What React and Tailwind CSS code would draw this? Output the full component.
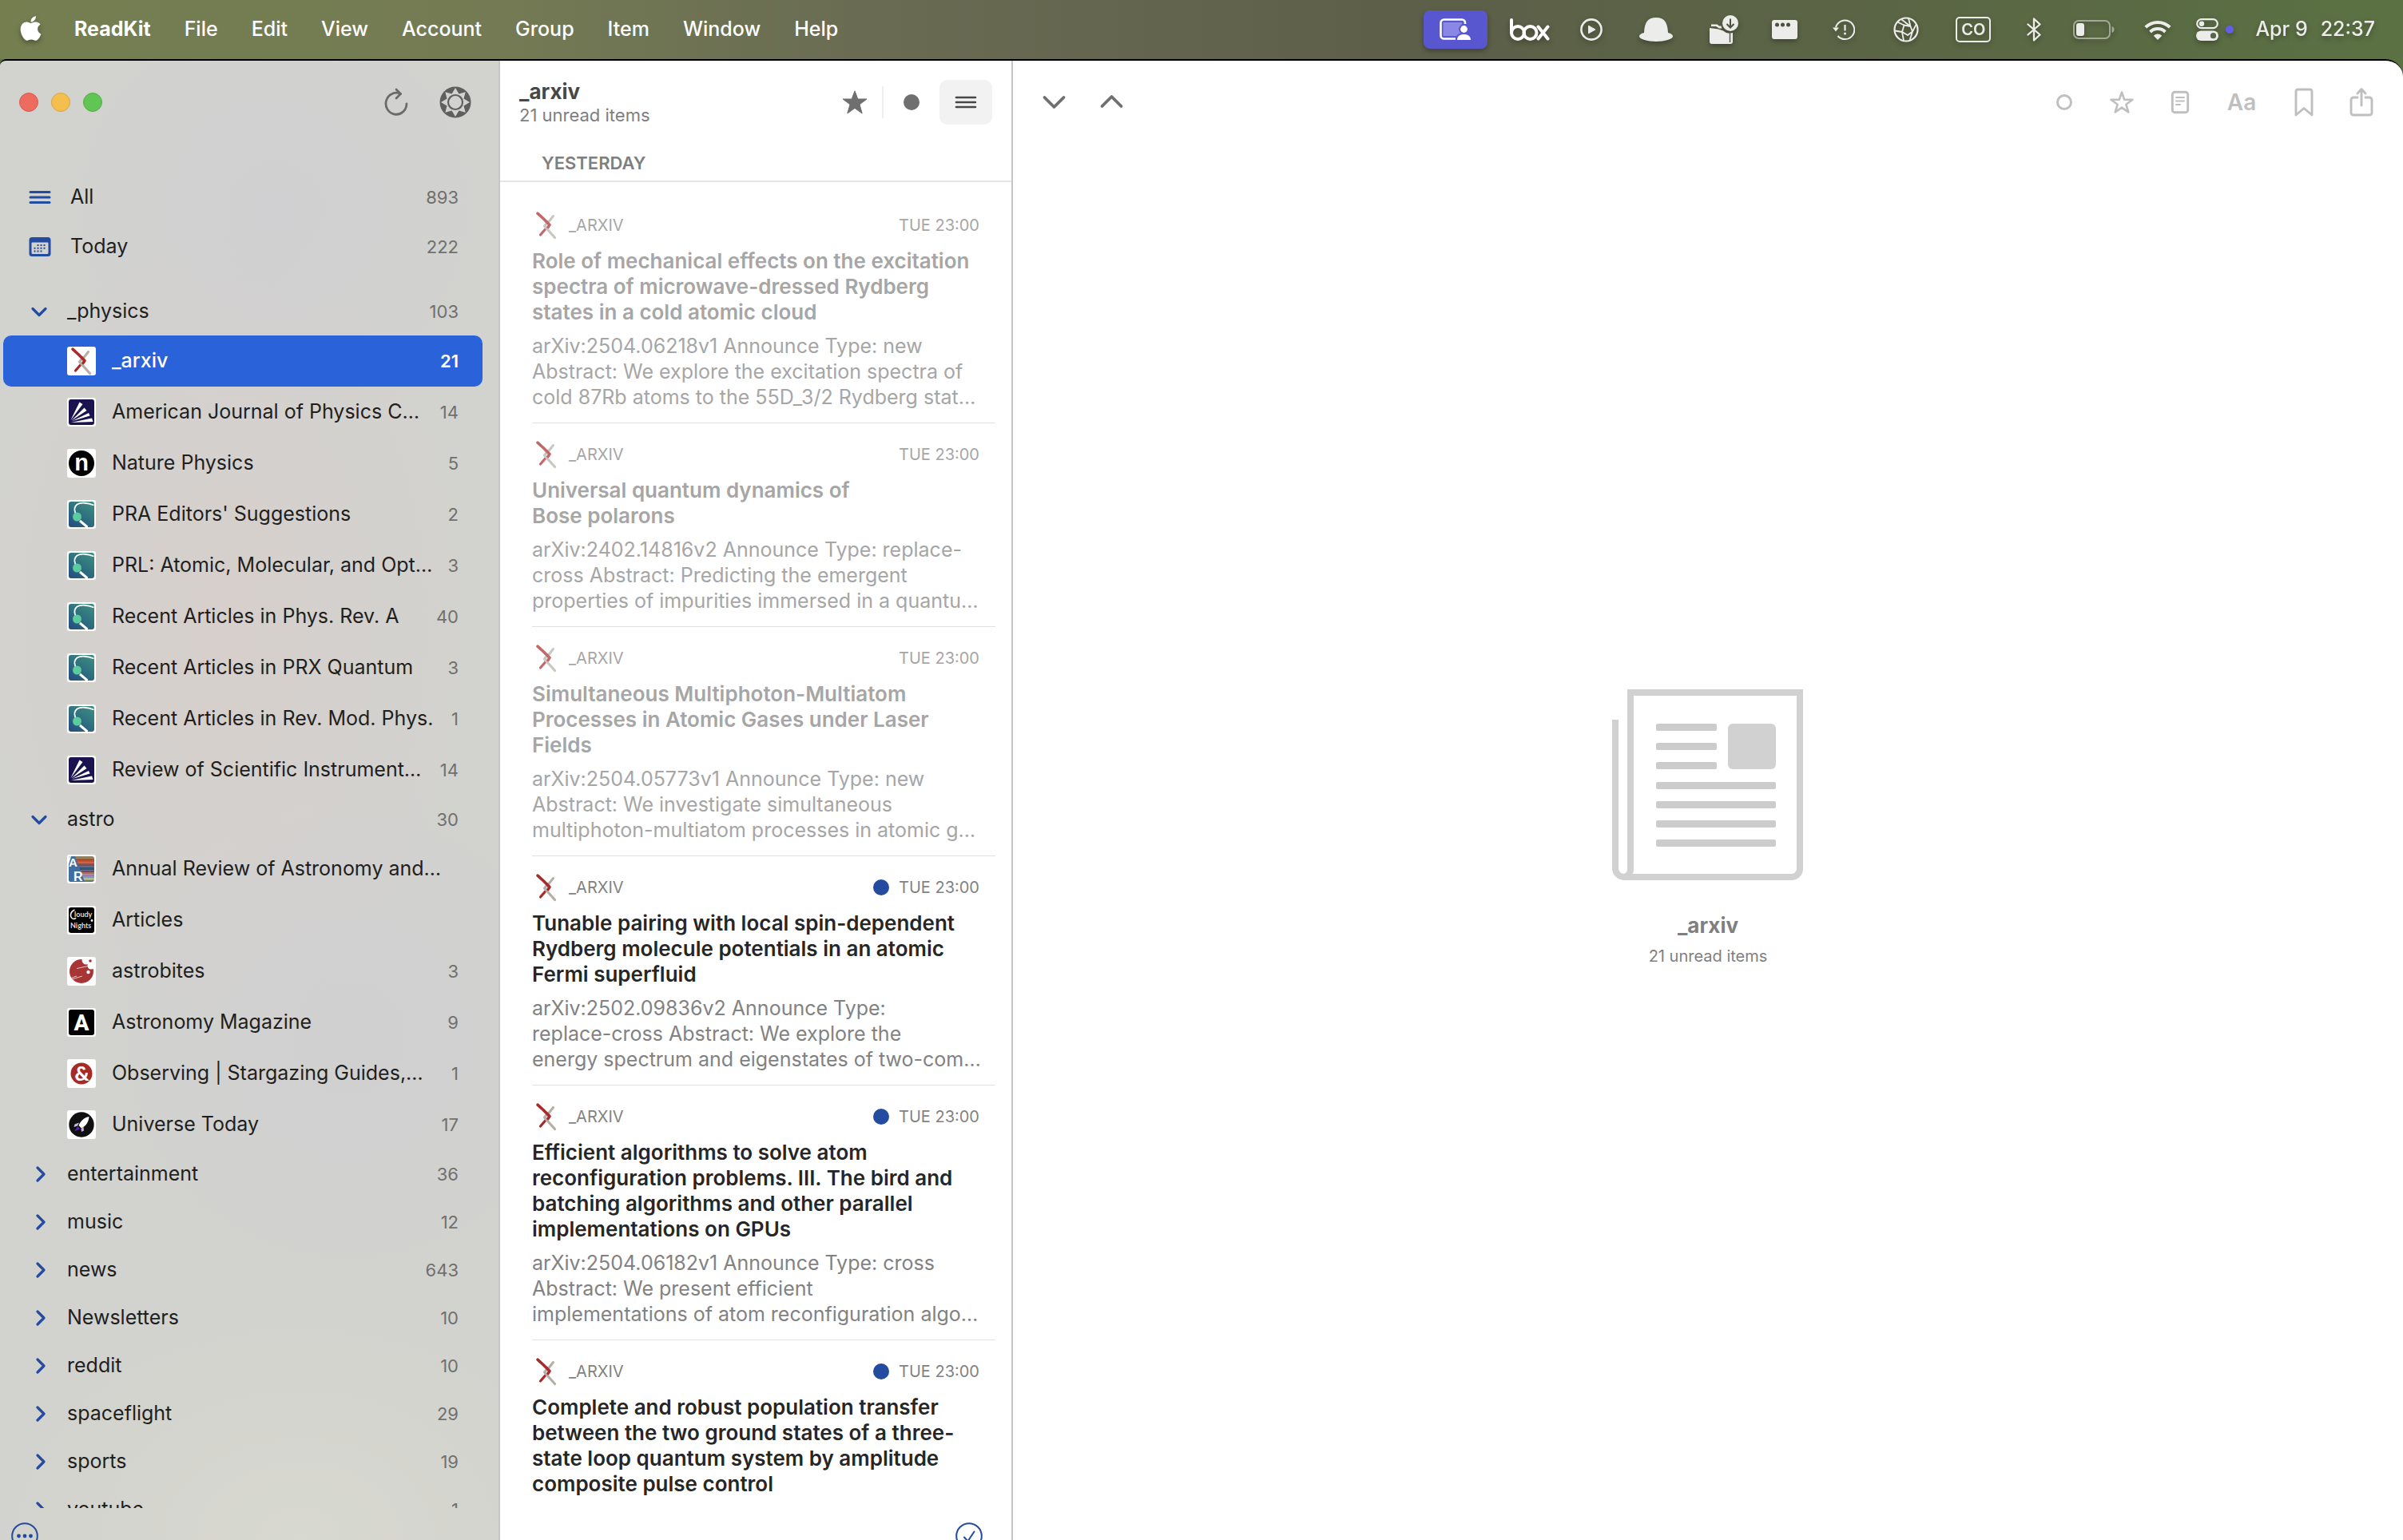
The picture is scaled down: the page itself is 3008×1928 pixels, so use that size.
import React from "react";
import { FaApple } from "react-icons/fa";

/* ---------- favicons ---------- */

function ArxivMark({ className }) {
  return (
    <svg viewBox="0 0 36 36" className={className} fill="none" strokeLinecap="round" strokeLinejoin="round" aria-hidden="true">
      <path d="M26.500 6.500 21 13.500" stroke="#b5afa8" strokeWidth="3" />
      <path d="M10.500 30 17 22.500" stroke="#a82b2b" strokeWidth="3.200" />
      <path d="M20 13.500 15.500 19 28.500 33.500" stroke="#b5afa8" strokeWidth="3.200" />
      <path d="M7 3.200 14 9.500 22 17.500 20 20.500" stroke="#a82b2b" strokeWidth="3.600" />
    </svg>
  );
}

function Tile({ children }) {
  return (
    <svg viewBox="0 0 36 36" className="size-9 shrink-0" fill="none" aria-hidden="true">
      <rect width="36" height="36" rx="3" fill="#fff" />
      {children}
    </svg>
  );
}

function AipIcon() {
  return (
    <Tile>
      <rect x="2" y="2" width="32" height="32" rx="3" fill="#1b1350" />
      <g fill="#fff">
        <path d="M4.500 28 15.500 5.500 19.500 8Z" />
        <path d="M5.500 28.500 21.500 12.500 24.500 16Z" />
        <path d="M6 29.300 27 19 28.500 22.500Z" />
        <path d="M5 31 31 25.500 32.500 30Z" />
      </g>
    </Tile>
  );
}

function NatureIcon() {
  return (
    <Tile>
      <circle cx="18" cy="18" r="16" fill="#000" />
      <text x="18" y="27" textAnchor="middle" fontFamily="Liberation Sans, sans-serif" fontWeight="700" fontSize="29" fill="#fff">n</text>
    </Tile>
  );
}

function ApsIcon() {
  return (
    <Tile>
      <defs>
        <linearGradient id="aps" x1="0.200" y1="1" x2="0.900" y2="0">
          <stop offset="0" stopColor="#24527f" />
          <stop offset="1" stopColor="#3c8f80" />
        </linearGradient>
      </defs>
      <rect x="2" y="2" width="32" height="32" rx="3" fill="url(#aps)" />
      <path d="M33.500 6.500C26 3.500 17 2.500 12.500 5.500 8.500 8.500 9 13 10.500 17" stroke="#fff" strokeWidth="1.800" />
      <path d="M16 26 25.500 34" stroke="#fff" strokeWidth="3" />
      <ellipse cx="12.500" cy="21" rx="5.500" ry="5.500" fill="#5ccc9f" />
    </Tile>
  );
}

function AnnualReviewIcon() {
  const bands = ["#8a8160", "#a0522f", "#c8492c", "#b3563f", "#7a4a55", "#3f5f85", "#35506f", "#6b4c63", "#a5705a", "#9a7cae", "#7f9cb0", "#b9b07c", "#5f7a66"];
  return (
    <Tile>
      <clipPath id="arClip"><rect x="2" y="2" width="32" height="32" rx="3" /></clipPath>
      <g clipPath="url(#arClip)">
        {bands.map((color, i) => (
          <rect key={i} x="2" y={2 + i * 2.5} width="32" height="2.600" fill={color} />
        ))}
        <path d="M2 2H10L22 34H2Z" fill="#3f6f9f" />
        <path d="M2 2H5L2 12Z" fill="#fff" />
        <text x="2" y="15" fontFamily="Liberation Sans, sans-serif" fontWeight="700" fontSize="15" fill="#fff">A</text>
        <text x="8" y="33" fontFamily="Liberation Sans, sans-serif" fontWeight="700" fontSize="16" fill="#fff">R</text>
      </g>
    </Tile>
  );
}

function CloudyNightsIcon() {
  return (
    <Tile>
      <rect x="2" y="2" width="32" height="32" rx="3" fill="#000" />
      <path d="M9.500 5C4.500 7 3 12 6 15.500 7.500 17 10 16.500 11 15" stroke="#eee" strokeWidth="1.600" />
      <text x="9" y="14" fontFamily="Lato, sans-serif" fontWeight="700" fontSize="9" fill="#ddd">loudy</text>
      <text x="4" y="28" fontFamily="Lato, sans-serif" fontWeight="700" fontSize="9" fill="#ddd">Nights</text>
      <circle cx="31" cy="18.500" r="1.400" fill="#fff" />
    </Tile>
  );
}

function AstrobitesIcon() {
  return (
    <Tile>
      <circle cx="18" cy="18" r="15" fill="#a93434" />
      <circle cx="24" cy="4" r="5.500" fill="#fff" />
      <circle cx="30" cy="11" r="4.500" fill="#fff" />
      <circle cx="26.500" cy="19" r="2.200" fill="#fff" />
      <circle cx="29" cy="5" r="1.800" fill="#a93434" />
      <path d="M12 14.500 26 11.500M6 28 19 24M5 26.500 12 24" stroke="#e8c4c4" strokeWidth="1" />
    </Tile>
  );
}

function AstronomyIcon() {
  return (
    <Tile>
      <rect x="2" y="2" width="32" height="32" rx="3" fill="#000" />
      <text x="18" y="28" textAnchor="middle" fontFamily="Roboto, sans-serif" fontWeight="800" fontSize="28" fill="#fff">A</text>
    </Tile>
  );
}

function ObservingIcon() {
  return (
    <Tile>
      <circle cx="18" cy="18" r="13.500" fill="#a62a25" />
      <text x="18.500" y="27" textAnchor="middle" fontFamily="Lato, sans-serif" fontWeight="900" fontSize="25" fill="#fff">&amp;</text>
    </Tile>
  );
}

function UniverseIcon() {
  return (
    <Tile>
      <circle cx="18" cy="18" r="15.700" fill="#101010" />
      <path d="M27.500 8C21.500 9 17 13 14.500 19L18 22.500C23.500 19.500 27 15 27.500 8Z" fill="#fff" />
      <path d="M15 15.500 9.500 17.500 8.500 21 13 19.500ZM20.500 20.500 21 25.500 18 27 17.500 23Z" fill="#c9b5ea" />
      <path d="M13.500 20 9 26.500 16 23.500Z" fill="#5a20c8" />
    </Tile>
  );
}

/* ---------- menu bar ---------- */

const MENUS = ["File", "Edit", "View", "Account", "Group", "Item", "Window", "Help"];

function StatusButton({ label, className, children }) {
  return (
    <button type="button" aria-label={label} className={`flex shrink-0 items-center justify-center ${className}`}>
      {children}
    </button>
  );
}

function MenuBar() {
  return (
    <header className="flex h-[74px] shrink-0 items-center bg-[linear-gradient(90deg,#747f50_0%,#747b54_20%,#686a52_38%,#5d5f49_58%,#5a6545_78%,#5b7143_100%)] pr-[35px] pl-[25px] text-[25px] font-medium whitespace-nowrap text-white [text-shadow:0_3px_6px_rgba(0,0,0,0.35)]">
      <nav aria-label="Menu bar" className="flex items-center gap-[42px]">
        <button type="button" aria-label="Apple menu" className="flex w-[26px] items-center justify-center pb-1 drop-shadow-[0_3px_3px_rgba(0,0,0,0.35)]">
          <FaApple size={35} className="shrink-0" />
        </button>
        <button type="button" className="font-bold">ReadKit</button>
        {MENUS.map((menu) => (
          <button key={menu} type="button">{menu}</button>
        ))}
      </nav>

      <div className="ml-auto flex items-center text-[#ececea] drop-shadow-[0_3px_3px_rgba(0,0,0,0.3)]">
        <StatusButton label="Screen sharing" className="h-12 w-20 rounded-[8px] bg-[#5957d0]">
          <svg viewBox="0 0 40 28" className="h-7 w-10" fill="none" aria-hidden="true">
            <path d="M20 25.500H5.500A4 4 0 0 1 1.500 21.500V5.500A4 4 0 0 1 5.500 1.500H28A4 4 0 0 1 32 5.500V7" stroke="#fff" strokeWidth="2.600" />
            <rect x="4.500" y="5" width="23.500" height="17" fill="#8a88e4" />
            <circle cx="30.500" cy="13.500" r="6.500" fill="#5957d0" />
            <path d="M20 27c0-6 4-9 10.500-9S40 21 40 27Z" fill="#5957d0" />
            <circle cx="30.500" cy="13.500" r="4.400" fill="#fff" />
            <path d="M22 27c0-4.500 3.500-7 8.500-7s8.500 2.500 8.500 7Z" fill="#fff" />
          </svg>
        </StatusButton>
        <StatusButton label="Box" className="ml-7">
          <svg viewBox="0 0 50 28" className="h-7 w-[50px]" fill="none" stroke="#fff" strokeWidth="4" strokeLinecap="round" aria-hidden="true">
            <path d="M2 2V18" />
            <circle cx="10" cy="18" r="8" />
            <circle cx="25.500" cy="18" r="8" />
            <path d="M35.500 10.500 47.500 25.500M47.500 10.500 35.500 25.500" />
          </svg>
        </StatusButton>
        <StatusButton label="Now playing" className="ml-[38px]">
          <svg viewBox="0 0 28 28" className="size-7" fill="none" aria-hidden="true">
            <circle cx="14" cy="14" r="12.600" stroke="currentColor" strokeWidth="2.600" />
            <path d="M10.500 9.200V18.800L19 14Z" fill="currentColor" stroke="currentColor" strokeLinejoin="round" />
          </svg>
        </StatusButton>
        <StatusButton label="Bartender" className="ml-[46px]">
          <svg viewBox="0 0 42 30" className="h-[30px] w-[42px]" fill="currentColor" aria-hidden="true">
            <path d="M6 19C6.500 7 10 0 21 0S35.500 7 36 19C40 20 42 21.500 42 23.500 42 27 32 30 21 30S0 27 0 23.500C0 21.500 2 20 6 19Z" />
          </svg>
        </StatusButton>
        <StatusButton label="Downloads" className="ml-[46px]">
          <svg viewBox="0 0 36 36" className="size-9" aria-hidden="true">
            <path d="M0 16 11 17.500 17 19.500A12 12 0 0 0 29 22V33A3 3 0 0 1 26 36H3A3 3 0 0 1 0 33Z" fill="currentColor" />
            <path d="M2 14 8 14 12 16.500H15.500A12 12 0 0 1 14.500 13.500H12L9.500 11.500H2Z" fill="currentColor" />
            <path d="M25.500 22.500V34" stroke="#5a6146" strokeWidth="1.500" />
            <circle cx="26" cy="10" r="10" fill="currentColor" />
            <path d="M26 4.500V15M21.500 11 26 15.500 30.500 11" fill="none" stroke="#4c523c" strokeWidth="2" />
          </svg>
        </StatusButton>
        <StatusButton label="Window manager" className="ml-[42px]">
          <svg viewBox="0 0 32 24" className="h-6 w-8" aria-hidden="true">
            <rect width="32" height="24" rx="3" fill="currentColor" />
            <g fill="#4c523c"><circle cx="6.500" cy="6" r="2.500" /><circle cx="13.500" cy="6" r="2.500" /><circle cx="20.500" cy="6" r="2.500" /></g>
          </svg>
        </StatusButton>
        <StatusButton label="Time Machine" className="ml-[44px]">
          <svg viewBox="0 0 28 28" className="size-7" fill="none" stroke="currentColor" strokeWidth="2" aria-hidden="true">
            <path d="M4 11.500A11.800 11.800 0 1 1 6.500 22" />
            <path d="M0 11.500H8L4 16.500Z" fill="currentColor" stroke="none" />
            <path d="M15.500 8V15.500" strokeWidth="2.200" />
            <circle cx="15.500" cy="19" r="1.500" fill="currentColor" stroke="none" />
          </svg>
        </StatusButton>
        <StatusButton label="Capture" className="ml-12">
          <svg viewBox="0 0 32 32" className="size-8" fill="none" stroke="currentColor" strokeWidth="2.200" strokeLinejoin="round" aria-hidden="true">
            <circle cx="16" cy="16" r="14.500" />
            <path d="M13.500 10.500 21.500 12 24 18.500 18 23 11 19ZM21.500 12 10.500 3.500M24 18.500 29 9M24 18.500 20.500 29.500M11 19 13 30M11 19 2 17.500M13.500 10.500 5 6.500M21.500 12 19 2" strokeWidth="1.800" />
          </svg>
        </StatusButton>
        <StatusButton label="Input source CO" className="ml-[46px] h-8 w-11 rounded-[5px] border-2 border-[#ececea] text-xl leading-none font-semibold">
          CO
        </StatusButton>
        <StatusButton label="Bluetooth" className="ml-[45px]">
          <svg viewBox="0 0 18 30" className="h-[30px] w-[18px]" fill="none" stroke="currentColor" strokeWidth="2.300" strokeLinejoin="round" strokeLinecap="round" aria-hidden="true">
            <path d="M1.500 8.500 16.500 21.500 9 28.500V1.500L16.500 8.500 1.500 21.500" />
          </svg>
        </StatusButton>
        <StatusButton label="Battery" className="ml-10">
          <svg viewBox="0 0 52 24" className="h-6 w-[52px]" fill="none" aria-hidden="true">
            <rect x="1" y="1" width="45" height="22" rx="6" stroke="#a3a997" strokeWidth="2" />
            <rect x="4" y="4" width="10" height="16" rx="3" fill="currentColor" />
            <path d="M48.500 8V16C50.500 15.500 51.500 14 51.500 12S50.500 8.500 48.500 8Z" fill="#a3a997" />
          </svg>
        </StatusButton>
        <StatusButton label="Wi-Fi" className="ml-[37px]">
          <svg viewBox="0 0 34 26" className="h-[26px] w-[34px]" fill="none" stroke="currentColor" strokeWidth="4" aria-hidden="true">
            <path d="M1.800 10.200A21.500 21.500 0 0 1 32.200 10.200" />
            <path d="M7.600 16A13.300 13.300 0 0 1 26.400 16" />
            <path d="M17 26 11.800 20.700A7.400 7.400 0 0 1 22.200 20.700Z" fill="currentColor" stroke="none" />
          </svg>
        </StatusButton>
        <StatusButton label="Control Center" className="ml-[31px] gap-[9px]">
          <svg viewBox="0 0 28 28" className="size-7" fill="none" aria-hidden="true">
            <rect x="1.200" y="1.200" width="25.600" height="11" rx="5.500" stroke="currentColor" strokeWidth="2.200" />
            <circle cx="7" cy="6.700" r="3.200" fill="currentColor" />
            <rect y="15.500" width="28" height="12.500" rx="6.200" fill="currentColor" />
            <circle cx="21.500" cy="21.700" r="3.600" fill="#59644a" />
          </svg>
          <span className="size-2.5 rounded-full bg-[#625fe6]" />
        </StatusButton>
        <button type="button" className="ml-[27px] flex gap-4">
          <span>Apr 9</span>
          <span>22:37</span>
        </button>
      </div>
    </header>
  );
}

/* ---------- sidebar ---------- */

const GROUPS = [
  {
    name: "_physics", count: 103, open: true, feeds: [
      { name: "_arxiv", count: 21, Icon: null, selected: true },
      { name: "American Journal of Physics C…", count: 14, Icon: AipIcon },
      { name: "Nature Physics", count: 5, Icon: NatureIcon },
      { name: "PRA Editors' Suggestions", count: 2, Icon: ApsIcon },
      { name: "PRL: Atomic, Molecular, and Opt…", count: 3, Icon: ApsIcon },
      { name: "Recent Articles in Phys. Rev. A", count: 40, Icon: ApsIcon },
      { name: "Recent Articles in PRX Quantum", count: 3, Icon: ApsIcon },
      { name: "Recent Articles in Rev. Mod. Phys.", count: 1, Icon: ApsIcon },
      { name: "Review of Scientific Instrument…", count: 14, Icon: AipIcon },
    ],
  },
  {
    name: "astro", count: 30, open: true, feeds: [
      { name: "Annual Review of Astronomy and…", Icon: AnnualReviewIcon },
      { name: "Articles", Icon: CloudyNightsIcon },
      { name: "astrobites", count: 3, Icon: AstrobitesIcon },
      { name: "Astronomy Magazine", count: 9, Icon: AstronomyIcon },
      { name: "Observing | Stargazing Guides,…", count: 1, Icon: ObservingIcon },
      { name: "Universe Today", count: 17, Icon: UniverseIcon },
    ],
  },
  { name: "entertainment", count: 36 },
  { name: "music", count: 12 },
  { name: "news", count: 643 },
  { name: "Newsletters", count: 10 },
  { name: "reddit", count: 10 },
  { name: "spaceflight", count: 29 },
  { name: "sports", count: 19 },
  { name: "youtube", count: 1 },
];

function Count({ value, selected }) {
  return (
    <span className={selected ? "ml-auto text-[22px] font-semibold text-white" : "ml-auto text-[22px] text-[#70706e]"}>
      {value}
    </span>
  );
}

function FeedRow({ feed }) {
  const { name, count, Icon, selected } = feed;
  return (
    <li>
      <a
        href="#feed"
        aria-current={selected ? "page" : undefined}
        className={
          selected
            ? "flex h-16 items-center rounded-[10px] bg-[#2962d9] pr-[30px] pl-20 font-medium text-white"
            : "flex h-16 items-center pr-[30px] pl-20"
        }
      >
        {Icon ? <Icon /> : <Tile><ArxivMark /></Tile>}
        <span className="ml-5">{name}</span>
        {count !== undefined && <Count value={count} selected={selected} />}
      </a>
    </li>
  );
}

function Chevron({ open }) {
  return (
    <svg viewBox="0 0 24 24" className="size-6" fill="none" stroke="#234b9f" strokeWidth="3.200" strokeLinecap="round" strokeLinejoin="round" aria-hidden="true">
      <path d={open ? "M4 8.500 12 16.500 20 8.500" : "M10 4 18 12 10 20"} />
    </svg>
  );
}

function Sidebar() {
  return (
    <aside className="flex w-[626px] shrink-0 flex-col overflow-hidden border-r-2 border-[#c6c6c9] bg-[#d2d2ce] bg-[radial-gradient(300px_500px_at_45%_38%,rgba(220,204,202,0.45),transparent),radial-gradient(300px_300px_at_55%_10%,rgba(207,207,212,0.7),transparent),radial-gradient(350px_350px_at_70%_66%,rgba(207,207,211,0.7),transparent),radial-gradient(400px_300px_at_60%_100%,rgba(217,218,208,0.8),transparent)] text-[25px] whitespace-nowrap text-[#1f1f1e]">
      <div className="flex h-[104px] shrink-0 items-center pr-[34px] pl-6">
        <div className="flex gap-4">
          <button type="button" aria-label="Close" className="size-6 rounded-full border border-[#d85a4e] bg-[#ed6b5f]" />
          <button type="button" aria-label="Minimize" className="size-6 rounded-full border border-[#d9a640] bg-[#f5bf4f]" />
          <button type="button" aria-label="Zoom" className="size-6 rounded-full border border-[#53ad47] bg-[#61c554]" />
        </div>
        <button type="button" aria-label="Refresh" className="ml-auto">
          <svg viewBox="0 0 32 36" className="h-9 w-8" fill="none" stroke="#6a6a68" strokeWidth="2.800" strokeLinecap="round" strokeLinejoin="round" aria-hidden="true">
            <path d="M16 2 21.500 7.500 16 13" />
            <path d="M21.500 7.500A13 13.500 0 1 0 29 20" />
          </svg>
        </button>
        <button type="button" aria-label="Settings" className="ml-[38px]">
          <svg viewBox="0 0 40 40" className="size-10" aria-hidden="true">
            <circle cx="20" cy="20" r="19.500" fill="#5f5f5d" />
            <path d="M20 2 24.500 9.500 32.700 7.300 30.500 15.500 38 20 30.500 24.500 32.700 32.700 24.500 30.500 20 38 15.500 30.500 7.300 32.700 9.500 24.500 2 20 9.500 15.500 7.300 7.300 15.500 9.500Z" fill="#d2d2cf" />
            <circle cx="20" cy="20" r="9" fill="none" stroke="#5f5f5d" strokeWidth="2.200" />
          </svg>
        </button>
      </div>

      <nav aria-label="Feeds" className="min-h-0 flex-1 overflow-hidden pt-9 pr-5 pl-1">
        <ul>
          <li>
            <a href="#all" className="flex h-[62px] items-center pr-[30px] pl-8">
              <svg viewBox="0 0 28 28" className="size-7" stroke="#234b9f" strokeWidth="3" strokeLinecap="round" aria-hidden="true">
                <path d="M2 7.500H26M2 14H26M2 20.500H26" />
              </svg>
              <span className="ml-6">All</span>
              <Count value={893} />
            </a>
          </li>
          <li>
            <a href="#today" className="flex h-[62px] items-center pr-[30px] pl-8">
              <svg viewBox="0 0 28 28" className="size-7" aria-hidden="true">
                <path fillRule="evenodd" fill="#234b9f" d="M4 2H24A3.500 3.500 0 0 1 27.500 5.500V22.500A3.500 3.500 0 0 1 24 26H4A3.500 3.500 0 0 1 .5 22.500V5.500A3.500 3.500 0 0 1 4 2ZM3.500 9.500V21.500A1.500 1.500 0 0 0 5 23H23A1.500 1.500 0 0 0 24.500 21.500V9.500A1 1 0 0 0 23.500 8.500H4.500A1 1 0 0 0 3.500 9.500Z" />
                <path d="M10.500 12H22.500M6.500 15.800H22.500M6.500 19.600H18" stroke="#234b9f" strokeWidth="2" strokeDasharray="2 2" />
              </svg>
              <span className="ml-6">Today</span>
              <Count value={222} />
            </a>
          </li>
        </ul>
        <ul className="mt-5">
          {GROUPS.map((group) => (
            <li key={group.name}>
              <button type="button" aria-expanded={!!group.open} className="flex h-[60px] w-full items-center pr-[30px] pl-[33px]">
                <Chevron open={group.open} />
                <span className="ml-[23px]">{group.name}</span>
                <Count value={group.count} />
              </button>
              {group.feeds && (
                <ul>
                  {group.feeds.map((feed) => (
                    <FeedRow key={feed.name} feed={feed} />
                  ))}
                </ul>
              )}
            </li>
          ))}
        </ul>
      </nav>

      <footer className="flex h-10 shrink-0 items-start overflow-hidden pt-[18px] pl-[14px]">
        <button type="button" aria-label="More" className="shrink-0">
          <svg viewBox="0 0 34 34" className="size-[34px]" fill="none" aria-hidden="true">
            <circle cx="17" cy="17" r="15.800" stroke="#234b9f" strokeWidth="2" />
            <g fill="#234b9f"><circle cx="9.500" cy="17" r="2.400" /><circle cx="17" cy="17" r="2.400" /><circle cx="24.500" cy="17" r="2.400" /></g>
          </svg>
        </button>
      </footer>
    </aside>
  );
}

/* ---------- article list ---------- */

const ARTICLES = [
  {
    read: true,
    title: ["Role of mechanical effects on the excitation", "spectra of microwave-dressed Rydberg", "states in a cold atomic cloud"],
    excerpt: ["arXiv:2504.06218v1 Announce Type: new", "Abstract: We explore the excitation spectra of", "cold 87Rb atoms to the 55D_3/2 Rydberg stat…"],
  },
  {
    read: true,
    title: ["Universal quantum dynamics of", "Bose polarons"],
    excerpt: ["arXiv:2402.14816v2 Announce Type: replace-", "cross Abstract: Predicting the emergent", "properties of impurities immersed in a quantu…"],
  },
  {
    read: true,
    title: ["Simultaneous Multiphoton-Multiatom", "Processes in Atomic Gases under Laser", "Fields"],
    excerpt: ["arXiv:2504.05773v1 Announce Type: new", "Abstract: We investigate simultaneous", "multiphoton-multiatom processes in atomic g…"],
  },
  {
    title: ["Tunable pairing with local spin-dependent", "Rydberg molecule potentials in an atomic", "Fermi superfluid"],
    excerpt: ["arXiv:2502.09836v2 Announce Type:", "replace-cross Abstract: We explore the", "energy spectrum and eigenstates of two-com…"],
  },
  {
    title: ["Efficient algorithms to solve atom", "reconfiguration problems. III. The bird and", "batching algorithms and other parallel", "implementations on GPUs"],
    excerpt: ["arXiv:2504.06182v1 Announce Type: cross", "Abstract: We present efficient", "implementations of atom reconfiguration algo…"],
  },
  {
    title: ["Complete and robust population transfer", "between the two ground states of a three-", "state loop quantum system by amplitude", "composite pulse control"],
    excerpt: [],
  },
];

function Lines({ lines }) {
  return lines.map((line) => (
    <span key={line} className="block">{line}</span>
  ));
}

function ArticleCard({ article }) {
  const { read, title, excerpt } = article;
  return (
    <article className="mr-5 ml-10 border-b border-[#e2e2e2]">
      <a href="#article" className="block pt-[21px] pr-5 pb-4 whitespace-nowrap">
        <div className={read ? "flex h-9 items-center text-xl text-[#a6a6a6]" : "flex h-9 items-center text-xl text-[#828282]"}>
          <ArxivMark className={read ? "size-9 opacity-70" : "size-9"} />
          <span className="ml-[10px]">_ARXIV</span>
          {!read && <span className="mr-3 ml-auto size-5 rounded-full bg-[#234b9f]" />}
          <time className={read ? "ml-auto" : ""}>TUE 23:00</time>
        </div>
        <h3 className={read ? "mt-[11px] text-[26px] leading-8 font-semibold text-[#a6a6a6]" : "mt-[11px] text-[26px] leading-8 font-semibold text-[#262626]"}>
          <Lines lines={title} />
        </h3>
        <p className={read ? "mt-2.5 text-[25px] leading-8 text-[#a6a6a6]" : "mt-2.5 text-[25px] leading-8 text-[#828282]"}>
          <Lines lines={excerpt} />
        </p>
      </a>
    </article>
  );
}

function ArticleList() {
  return (
    <section aria-label="Articles" className="flex w-[642px] shrink-0 flex-col overflow-hidden border-r-2 border-[#c6c6c9] bg-white">
      <header className="flex h-[104px] shrink-0 items-center px-6">
        <div className="pt-0.5">
          <h1 className="text-[26px] leading-[30px] font-bold text-[#474747]">_arxiv</h1>
          <p className="text-[22px] leading-7 text-[#7f7f7f]">21 unread items</p>
        </div>
        <div className="ml-auto flex items-center" role="group" aria-label="Filter">
          <button type="button" aria-label="Starred" className="flex h-10 w-[52px] items-center justify-start border-r-2 border-[#efefef]">
            <svg viewBox="0 0 32 30" className="h-[30px] w-8" aria-hidden="true">
              <path d="M16 .8 19.800 11H31L22 17.800 25.200 29 16 22.400 6.800 29 10 17.800 1 11H12.200Z" fill="#6f6f6f" stroke="#6f6f6f" strokeLinejoin="round" />
            </svg>
          </button>
          <button type="button" aria-label="Unread" className="flex h-14 w-[70px] items-center justify-center">
            <span className="size-5 rounded-full bg-[#6f6f6f]" />
          </button>
          <button type="button" aria-label="All items" aria-pressed="true" className="flex h-14 w-[66px] items-center justify-center rounded-[10px] bg-[#f2f2f2]">
            <svg viewBox="0 0 28 20" className="h-5 w-7" stroke="#474747" strokeWidth="2.600" strokeLinecap="round" aria-hidden="true">
              <path d="M2 4H26M2 10H26M2 16H26" />
            </svg>
          </button>
        </div>
      </header>
      <h2 className="flex h-12 shrink-0 items-center border-b-2 border-[#e5e5e5] pt-0.5 pl-[52px] text-[22px] font-semibold text-[#7f7f7f]">YESTERDAY</h2>
      <div className="min-h-0 flex-1 overflow-hidden pt-[15px]">
        {ARTICLES.map((article) => (
          <ArticleCard key={article.title[0]} article={article} />
        ))}
      </div>
      <footer className="flex h-10 shrink-0 items-start justify-end overflow-hidden bg-white pt-[18px] pr-9">
        <button type="button" aria-label="Mark all as read" className="shrink-0">
          <svg viewBox="0 0 34 34" className="size-[34px]" fill="none" stroke="#234b9f" strokeWidth="2" strokeLinecap="round" strokeLinejoin="round" aria-hidden="true">
            <circle cx="17" cy="17" r="15.800" />
            <path d="M11 18.500 15.500 23.500 23.500 11.500" />
          </svg>
        </button>
      </footer>
    </section>
  );
}

/* ---------- reader ---------- */

function ToolButton({ label, className, children }) {
  return (
    <button type="button" aria-label={label} className={`flex h-12 items-center justify-center ${className}`}>
      {children}
    </button>
  );
}

function Reader() {
  return (
    <main className="flex min-w-0 flex-1 flex-col bg-white">
      <div className="flex h-[104px] shrink-0 items-center pr-[34px] pl-[33px] text-[#bfbfbf]">
        <ToolButton label="Next item" className="w-9">
          <svg viewBox="0 0 36 36" className="size-9" fill="none" stroke="#6f6f6f" strokeWidth="3.800" strokeLinecap="round" strokeLinejoin="round" aria-hidden="true">
            <path d="M6.500 12 18.500 24 30.500 12" />
          </svg>
        </ToolButton>
        <ToolButton label="Previous item" className="ml-9 w-9">
          <svg viewBox="0 0 36 36" className="size-9" fill="none" stroke="#6f6f6f" strokeWidth="3.800" strokeLinecap="round" strokeLinejoin="round" aria-hidden="true">
            <path d="M6.500 23 18.500 11 30.500 23" />
          </svg>
        </ToolButton>
        <div className="ml-auto flex items-center">
          <ToolButton label="Toggle read" className="w-9">
            <span className="size-5 rounded-full border-3 border-[#bfbfbf]" />
          </ToolButton>
          <ToolButton label="Toggle star" className="ml-9 w-9">
            <svg viewBox="0 0 32 30" className="h-[30px] w-8" fill="none" stroke="currentColor" strokeWidth="2.600" strokeLinejoin="round" aria-hidden="true">
              <path d="M16 2.500 19.200 11.700H29.500L21.300 17.700 24.300 27.500 16 21.600 7.700 27.500 10.700 17.700 2.500 11.700H12.800Z" />
            </svg>
          </ToolButton>
          <ToolButton label="Reader view" className="ml-[37px] w-9">
            <svg viewBox="0 0 24 30" className="h-[30px] w-6" fill="none" stroke="currentColor" strokeLinecap="round" aria-hidden="true">
              <rect x="2.300" y="2.300" width="19.400" height="25.400" rx="3" strokeWidth="2.900" />
              <path d="M7 9H17M7 13.500H17M7 18H12" strokeWidth="2" />
            </svg>
          </ToolButton>
          <ToolButton label="Text appearance" className="ml-[27px] w-16 text-[28px] font-semibold">Aa</ToolButton>
          <ToolButton label="Bookmark" className="ml-7 w-9">
            <svg viewBox="0 0 24 36" className="h-9 w-6" fill="none" stroke="currentColor" strokeWidth="2.900" strokeLinejoin="round" aria-hidden="true">
              <path d="M2 34V4.500A2.500 2.500 0 0 1 4.500 2H19.500A2.500 2.500 0 0 1 22 4.500V34L12 25.500Z" />
            </svg>
          </ToolButton>
          <ToolButton label="Share" className="ml-9 w-9">
            <svg viewBox="0 0 30 38" className="h-[38px] w-[30px]" fill="none" stroke="currentColor" strokeWidth="2.900" strokeLinecap="round" strokeLinejoin="round" aria-hidden="true">
              <path d="M10 13H5A3 3 0 0 0 2 16V32A3 3 0 0 0 5 35H25A3 3 0 0 0 28 32V16A3 3 0 0 0 25 13H20" />
              <path d="M15 23V3M10 8 15 2.500 20 8" />
            </svg>
          </ToolButton>
        </div>
      </div>
      <div className="flex flex-1 flex-col items-center justify-center pb-8">
        <svg viewBox="0 0 240 240" className="size-60" fill="none" aria-hidden="true">
          <path d="M23 4H235V225A10.500 10.500 0 0 1 224.500 235H15A11 11 0 0 1 4 224V38" stroke="#d1d1d1" strokeWidth="8" />
          <path d="M23 0V225A9.500 9.500 0 0 1 13.500 235" stroke="#d1d1d1" strokeWidth="8" />
          <g fill="#cccccc">
            <rect x="55" y="43" width="76" height="9" rx="2" />
            <rect x="55" y="67" width="76" height="9" rx="2" />
            <rect x="55" y="91" width="76" height="9" rx="2" />
            <rect x="55" y="116" width="150" height="9" rx="2" />
            <rect x="55" y="140" width="150" height="9" rx="2" />
            <rect x="55" y="164" width="150" height="9" rx="2" />
            <rect x="55" y="188" width="150" height="9" rx="2" />
          </g>
          <rect x="145" y="43" width="60" height="57" rx="6" fill="#d1d1d1" />
        </svg>
        <h2 className="mt-[38px] text-[26px] leading-9 font-bold text-[#7f7f7f]">_arxiv</h2>
        <p className="mt-1 text-xl leading-8 text-[#7f7f7f]">21 unread items</p>
      </div>
    </main>
  );
}

export default function App() {
  return (
    <div className="flex h-screen flex-col overflow-hidden bg-[#5b7143] font-['Inter',sans-serif]">
      <MenuBar />
      <div className="flex min-h-0 flex-1 overflow-hidden rounded-tl-[8px] rounded-tr-[22px] border-t-2 border-black">
        <Sidebar />
        <ArticleList />
        <Reader />
      </div>
    </div>
  );
}
